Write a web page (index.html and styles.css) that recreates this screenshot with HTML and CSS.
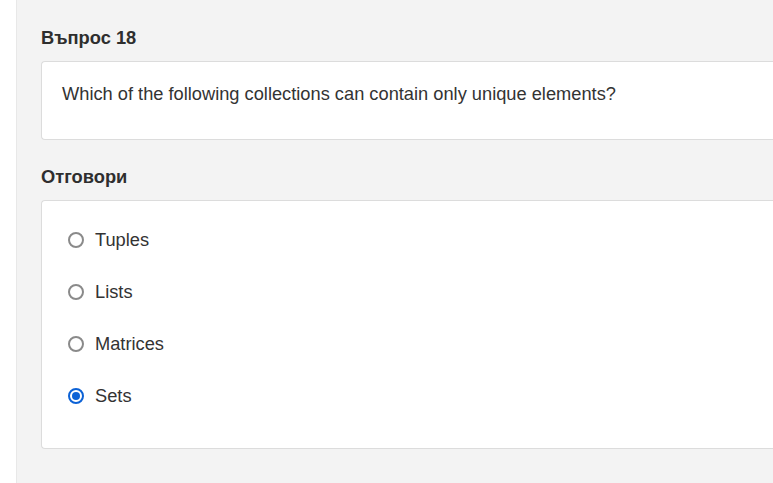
FILE: index.html
```html
<!DOCTYPE html>
<html>
<head>
<meta charset="utf-8">
<link rel="stylesheet" href="styles.css">
</head>
<body>
<div class="page">
  <main class="content">
    <h2 class="heading">Въпрос 18</h2>
    <div class="card question">
      <p>Which of the following collections can contain only unique elements?</p>
    </div>
    <h2 class="heading">Отговори</h2>
    <div class="card answers">
      <label class="option"><span class="radio"></span>Tuples</label>
      <label class="option"><span class="radio"></span>Lists</label>
      <label class="option"><span class="radio"></span>Matrices</label>
      <label class="option"><span class="radio checked"></span>Sets</label>
    </div>
  </main>
</div>
</body>
</html>
```
FILE: styles.css
```css
html, body {
  margin: 0;
  padding: 0;
  height: 100%;
  overflow: hidden;
}
body {
  font-family: "Liberation Sans", Arial, sans-serif;
  color: #333;
  background: #fff;
}
.page {
  display: flex;
  height: 100%;
  padding-left: 16px;
}
.content {
  flex: 1;
  background: #f3f3f3;
  border-left: 1px solid #e8e8e8;
  padding: 0 0 0 24px;
  min-width: 0;
}
.heading {
  font-size: 18.3px;
  font-weight: bold;
  margin: 0;
  line-height: 20px;
  color: #2e2e2e;
}
.content > .heading:first-child {
  margin-top: 28px;
  margin-bottom: 13px;
}
.card {
  background: #fff;
  border: 1px solid #dcdcdc;
  border-right: none;
  border-radius: 4px 0 0 4px;
}
.question {
  padding: 19px 20px 0 20px;
  height: 58px;
}
.question p {
  margin: 0;
  font-size: 18.25px;
  line-height: 26px;
  color: #333;
}
.content > .heading:nth-of-type(2) {
  margin-top: 27px;
  margin-bottom: 13px;
}
.answers {
  padding: 19px 25px 32px 25px;
  display: flex;
  flex-direction: column;
  gap: 12px;
}
.option {
  display: flex;
  align-items: center;
  height: 40px;
  font-size: 18.25px;
  color: #333;
}
.radio {
  width: 16px;
  height: 16px;
  box-sizing: border-box;
  border: 2px solid #8a8a8a;
  border-radius: 50%;
  margin-right: 11px;
  margin-left: 1px;
  position: relative;
}
.radio.checked {
  border-color: #0c62d6;
}
.radio.checked::after {
  content: "";
  position: absolute;
  left: 2px;
  top: 2px;
  width: 8px;
  height: 8px;
  border-radius: 50%;
  background: #0c62d6;
}
```
